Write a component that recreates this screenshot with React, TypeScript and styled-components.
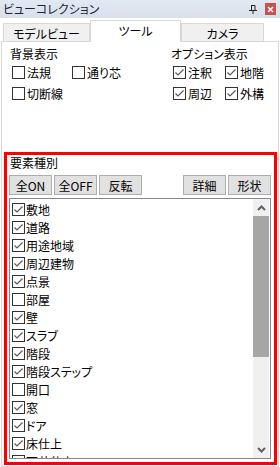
import React from 'react'
import styled, { createGlobalStyle } from 'styled-components'

const GlobalStyle = createGlobalStyle`
    body {
        margin: 0;
        background: #ffffff;
        font-family: "Noto Sans CJK JP", "Noto Sans", sans-serif;
        font-size: 12px;
        font-feature-settings: "palt";
        color: #000000;
    }
`

const Window = styled.div`
    width: 280px;
    height: 467px;
    overflow: hidden;
    display: flex;
    flex-direction: column;
    background: #ffffff;
`

const TitleBar = styled.div`
    height: 18px;
    display: flex;
    align-items: center;
    padding: 0 4px 0 3px;
    background: linear-gradient(#e2e9f2, #d8e0eb);
`

const Title = styled.span`
    flex-grow: 1;
    line-height: 18px;
    color: #1a2238;
`

const TitleButtons = styled.div`
    display: flex;
    align-items: center;
    gap: 8px;
`

const CloseButton = styled.div`
    width: 11px;
    height: 12px;
    background: #c9504c;
    display: flex;
    align-items: center;
    justify-content: center;
`

const TabRow = styled.div`
    height: 23px;
    display: flex;
    align-items: flex-end;
    padding-left: 3px;
`

const Tab = styled.div<{ $active?: boolean; $width: number }>`
    width: ${p => p.$width}px;
    height: ${p => p.$active ? 22 : 18}px;
    box-sizing: border-box;
    border: 1px solid #d9d9d9;
    border-bottom: none;
    background: ${p => p.$active ? '#ffffff' : '#f0f0f0'};
    margin-bottom: ${p => p.$active ? -1 : 0}px;
    position: relative;
    z-index: ${p => p.$active ? 1 : 0};
    display: flex;
    justify-content: center;
    line-height: ${p => p.$active ? 19 : 19}px;
    padding-top: ${p => p.$active ? 0 : 0}px;
`

const Panel = styled.div`
    flex-grow: 1;
    margin: 0 1px;
    border: 1px solid #d9d9d9;
    background: #ffffff;
    padding: 0 1px 0 2px;
    display: flex;
    flex-direction: column;
`

const OptionsArea = styled.div`
    display: flex;
    height: 110px;
`

const OptionGroup = styled.div<{ $width: number }>`
    width: ${p => p.$width}px;
    padding-top: 4px;
    padding-left: 6px;
`

const GroupLabel = styled.div`
    line-height: 16px;
`

const CheckGrid = styled.div<{ $col: number }>`
    display: grid;
    grid-template-columns: ${p => p.$col}px ${p => p.$col}px;
    grid-auto-rows: 21px;
    padding-left: 2px;
`

const CheckItem = styled.label`
    display: flex;
    align-items: center;
    gap: 2px;
    height: 100%;
    white-space: nowrap;
`

const RedBox = styled.section`
    flex-grow: 1;
    border: 3px solid #ff0000;
    padding: 0 3px 1px 2px;
    margin-bottom: 1px;
    display: flex;
    flex-direction: column;
`

const SectionLabel = styled.div`
    line-height: 16px;
    padding-left: 1px;
`

const ButtonRow = styled.div`
    display: flex;
    gap: 2px;
    margin-top: 4px;
`

const Spacer = styled.div`
    flex-grow: 1;
`

const Button = styled.button`
    width: 43px;
    height: 20px;
    padding: 0;
    background: #e1e1e1;
    border: 1px solid #adadad;
    font-family: inherit;
    font-size: 12px;
    font-feature-settings: "palt";
    color: #000;
    line-height: 17px;
`

const ListBox = styled.div`
    height: 261px;
    box-sizing: border-box;
    margin-top: 3px;
    border: 1px solid #828790;
    padding-right: 1px;
    display: flex;
    overflow: hidden;
`

const Items = styled.div`
    flex-grow: 1;
    padding: 1px 0 0 2px;
    overflow: hidden;
`

const Row = styled.div`
    height: 18px;
    display: flex;
    align-items: center;
    gap: 1px;
    white-space: nowrap;
`

const ScrollBar = styled.div`
    width: 16px;
    background: #f0f0f0;
    display: flex;
    flex-direction: column;
`

const ScrollButton = styled.div`
    height: 17px;
    display: flex;
    align-items: center;
    justify-content: center;
`

const Thumb = styled.div`
    height: 141px;
    background: #a6a6a6;
`

function CheckBox(props: { checked: boolean }): React.ReactElement {
    return <svg width="13" height="13" viewBox="0 0 13 13" style={{ flexShrink: 0 }}>
        <rect x="0.5" y="0.5" width="12" height="12" fill="#fff" stroke="#333" />
        {props.checked ? <path d="M2.5 6.5 L5 9 L10.5 3.5" fill="none" stroke="#5a5a5a" strokeWidth="1.2" /> : null}
    </svg>
}

function Chevron(props: { up: boolean }): React.ReactElement {
    return <svg width="9" height="6" viewBox="0 0 9 6">
        <path d={props.up ? "M1 5 L4.5 1.5 L8 5" : "M1 1 L4.5 4.5 L8 1"} fill="none" stroke="#606060" strokeWidth="2" />
    </svg>
}

const elements: Array<[string, boolean]> = [
    ['敷地', true],
    ['道路', true],
    ['用途地域', true],
    ['周辺建物', true],
    ['点景', true],
    ['部屋', false],
    ['壁', true],
    ['スラブ', true],
    ['階段', true],
    ['階段ステップ', true],
    ['開口', false],
    ['窓', true],
    ['ドア', true],
    ['床仕上', true],
    ['天井仕上', false],
]

export default function App(): React.ReactElement {
    return <>
        <GlobalStyle />
        <Window>
            <TitleBar>
                <Title>ビューコレクション</Title>
                <TitleButtons>
                    <svg width="8" height="9" viewBox="0 0 8 9">
                        <path d="M2 0.5 H6 V5 M2.5 0.5 V5 M0 5.5 H8 M4 5.5 V9" fill="none" stroke="#222" strokeWidth="1" />
                    </svg>
                    <CloseButton>
                        <svg width="7" height="7" viewBox="0 0 7 7">
                            <path d="M1 1 L6 6 M6 1 L1 6" stroke="#fff" strokeWidth="1.6" />
                        </svg>
                    </CloseButton>
                </TitleButtons>
            </TitleBar>
            <TabRow>
                <Tab $width={87}>モデルビュー</Tab>
                <Tab $width={91} $active>ツール</Tab>
                <Tab $width={83}>カメラ</Tab>
            </TabRow>
            <Panel>
                <OptionsArea>
                    <OptionGroup $width={162}>
                        <GroupLabel>背景表示</GroupLabel>
                        <CheckGrid $col={60}>
                            <CheckItem><CheckBox checked={false} />法規</CheckItem>
                            <CheckItem><CheckBox checked={false} />通り芯</CheckItem>
                            <CheckItem><CheckBox checked={false} />切断線</CheckItem>
                        </CheckGrid>
                    </OptionGroup>
                    <OptionGroup $width={110}>
                        <GroupLabel>オプション表示</GroupLabel>
                        <CheckGrid $col={52}>
                            <CheckItem><CheckBox checked />注釈</CheckItem>
                            <CheckItem><CheckBox checked />地階</CheckItem>
                            <CheckItem><CheckBox checked />周辺</CheckItem>
                            <CheckItem><CheckBox checked />外構</CheckItem>
                        </CheckGrid>
                    </OptionGroup>
                </OptionsArea>
                <RedBox>
                    <SectionLabel>要素種別</SectionLabel>
                    <ButtonRow>
                        <Button>全ON</Button>
                        <Button>全OFF</Button>
                        <Button>反転</Button>
                        <Spacer />
                        <Button>詳細</Button>
                        <Button>形状</Button>
                    </ButtonRow>
                    <ListBox>
                        <Items>
                            {elements.map(([name, checked]) => {
                                return <Row key={name}><CheckBox checked={checked} />{name}</Row>
                            })}
                        </Items>
                        <ScrollBar>
                            <ScrollButton><Chevron up /></ScrollButton>
                            <Thumb />
                            <Spacer />
                            <ScrollButton><Chevron up={false} /></ScrollButton>
                        </ScrollBar>
                    </ListBox>
                </RedBox>
            </Panel>
        </Window>
    </>
}
